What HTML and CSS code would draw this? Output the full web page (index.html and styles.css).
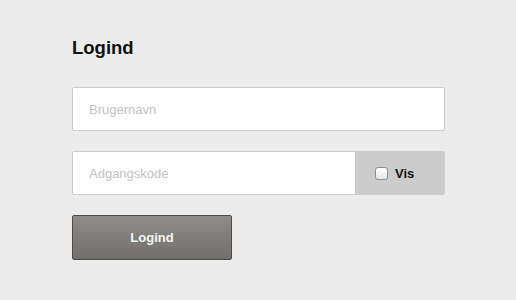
FILE: index.html
```html
<!DOCTYPE html>
<html>
<head>
<meta charset="utf-8">
<link rel="stylesheet" href="styles.css">
</head>
<body>
<div class="login">
  <h1 class="title">Logind</h1>
  <div class="field">
    <input class="input" type="text" placeholder="Brugernavn">
  </div>
  <div class="field field-pass">
    <input class="input" type="password" placeholder="Adgangskode">
    <label class="show"><input class="check" type="checkbox"><span>Vis</span></label>
  </div>
  <button class="btn">Logind</button>
</div>
</body>
</html>
```
FILE: styles.css
```css
html, body {
  margin: 0;
  background: #ececec;
  font-family: "Liberation Sans", Arial, sans-serif;
}
.login {
  padding: 37px 0 0 72px;
  width: 373px;
}
.title {
  margin: 0 0 29px;
  font-size: 18.5px;
  line-height: 21px;
  font-weight: bold;
  color: #111;
}
.field {
  display: flex;
  height: 44px;
  box-sizing: border-box;
  border: 1px solid #cbcbcb;
  border-radius: 2px;
  background: #fff;
  margin-bottom: 20px;
  overflow: hidden;
}
.input {
  flex: 1;
  min-width: 0;
  border: 0;
  outline: none;
  padding: 0 0 0 16px;
  font-family: "Liberation Sans", Arial, sans-serif;
  font-size: 13px;
  color: #333;
  background: transparent;
}
.input::placeholder {
  color: #c2c2c2;
}
.show {
  width: 89px;
  background: #cccccc;
  display: flex;
  align-items: center;
  padding-left: 20px;
  box-sizing: border-box;
  font-size: 13px;
  font-weight: bold;
  color: #111;
}
.check {
  appearance: none;
  -webkit-appearance: none;
  width: 13px;
  height: 13px;
  margin: 0 7px 0 0;
  border: 1px solid #8f8f8f;
  border-radius: 3px;
  background: linear-gradient(#ffffff, #e6e6e6);
  box-sizing: border-box;
}
.btn {
  display: block;
  width: 160px;
  height: 45px;
  border: 1px solid #4e4c4a;
  border-radius: 2px;
  background: linear-gradient(#8e8b88, #72706d);
  color: #f4f4f4;
  font-family: "Liberation Sans", Arial, sans-serif;
  font-size: 13px;
  font-weight: bold;
  padding: 0;
}
```
